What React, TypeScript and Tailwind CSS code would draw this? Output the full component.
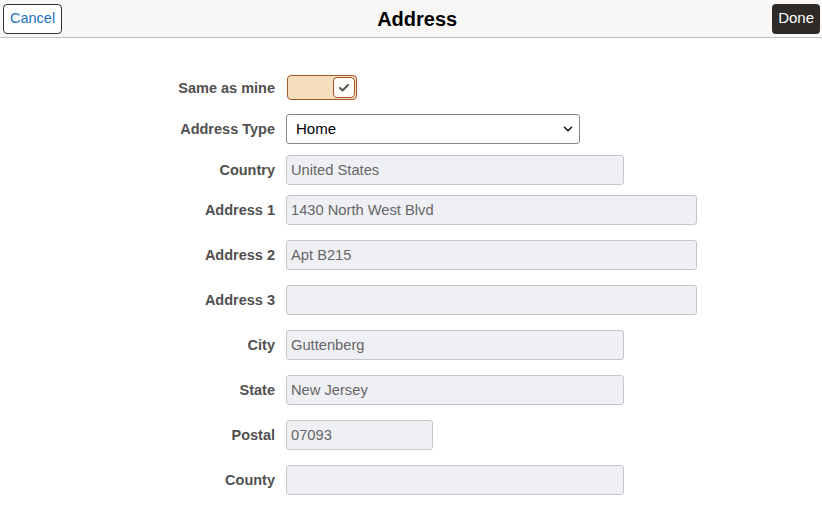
import { ChevronDown, Check } from "lucide-react";

const font = { fontFamily: '"Liberation Sans", Arial, sans-serif' };

type Row = { label: string; value: string; width: string; gap: string };

const rows: Row[] = [
  { label: "Country", value: "United States", width: "w-[338px]", gap: "mt-[11px]" },
  { label: "Address 1", value: "1430 North West Blvd", width: "w-[411px]", gap: "mt-[10px]" },
  { label: "Address 2", value: "Apt B215", width: "w-[411px]", gap: "mt-[15px]" },
  { label: "Address 3", value: "", width: "w-[411px]", gap: "mt-[15px]" },
  { label: "City", value: "Guttenberg", width: "w-[338px]", gap: "mt-[15px]" },
  { label: "State", value: "New Jersey", width: "w-[338px]", gap: "mt-[15px]" },
  { label: "Postal", value: "07093", width: "w-[147px]", gap: "mt-[15px]" },
  { label: "County", value: "", width: "w-[338px]", gap: "mt-[15px]" },
];

function Label({ children }: { children: React.ReactNode }) {
  return (
    <div className="w-[275px] shrink-0 pt-[2px] text-right text-[14.5px] font-bold text-[#505050]">
      {children}
    </div>
  );
}

export default function App() {
  return (
    <div className="h-[514px] w-[822px] overflow-hidden bg-white" style={font}>
      <header className="flex h-[38px] items-center justify-between border-b border-[#c4c2bf] bg-[#f8f7f5] pl-[3px] pr-[2px]">
        <button className="h-[30px] rounded-[4px] border border-[#333] bg-white px-[6px] text-[14.5px] text-[#1b73c1]">
          Cancel
        </button>
        <h1 className="text-[20px] font-bold text-black">Address</h1>
        <button className="h-[30px] rounded-[4px] bg-[#2e2a27] px-[6px] text-[15px] text-white">
          Done
        </button>
      </header>

      <div className="flex flex-col">
        <div className="mt-[37px] flex items-center">
          <Label>Same as mine</Label>
          <div className="ml-[12px] flex h-[25px] w-[70px] items-center justify-end rounded-[4px] border border-[#a4552c] bg-[#f5dfbd] pr-[1px]">
            <div className="flex h-[21px] w-[22px] items-center justify-center rounded-[4px] border border-[#a4552c] bg-[#fdfbf8]">
              <Check size={12} strokeWidth={4} className="text-[#555]" />
            </div>
          </div>
        </div>

        <div className="mt-[14px] flex items-center">
          <Label>Address Type</Label>
          <div className="ml-[11px] flex h-[30px] w-[294px] items-center justify-between rounded-[3px] border border-[#8a8a8a] bg-white pl-[9px] pr-[4px] text-[15px] text-black">
            <span>Home</span>
            <ChevronDown size={14} strokeWidth={3} className="text-[#222]" />
          </div>
        </div>

        {rows.map((r) => (
          <div key={r.label} className={`${r.gap} flex items-center`}>
            <Label>{r.label}</Label>
            <div
              className={`ml-[11px] flex h-[30px] ${r.width} items-center rounded-[3px] border border-[#c3c7cc] bg-[#eff0f3] pl-[4px] text-[14.7px] text-[#666]`}
            >
              {r.value}
            </div>
          </div>
        ))}
      </div>
    </div>
  );
}
